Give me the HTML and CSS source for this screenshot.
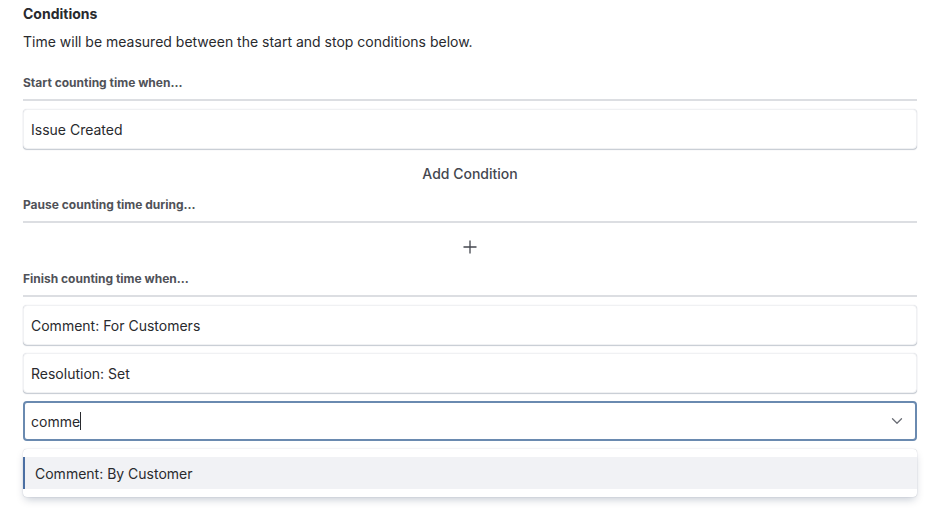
FILE: index.html
```html
<!DOCTYPE html>
<html>
<head>
<meta charset="utf-8">
<link rel="stylesheet" href="styles.css">
</head>
<body>
<div class="page">
  <h2 class="title">Conditions</h2>
  <p class="desc">Time will be measured between the start and stop conditions below.</p>

  <section class="group">
    <div class="label">Start counting time when...</div>
    <div class="rule"></div>
    <div class="items">
      <div class="card">Issue Created</div>
      <button class="add-btn">Add Condition</button>
    </div>
  </section>

  <section class="group">
    <div class="label">Pause counting time during...</div>
    <div class="rule"></div>
    <div class="items">
      <button class="plus-btn" aria-label="Add">
        <svg width="14" height="14" viewBox="0 0 14 14"><path d="M7 0.5V13.5M0.5 7H13.5" stroke="#44474f" stroke-width="1.3" fill="none"/></svg>
      </button>
    </div>
  </section>

  <section class="group">
    <div class="label">Finish counting time when...</div>
    <div class="rule"></div>
    <div class="items">
      <div class="card">Comment: For Customers</div>
      <div class="card">Resolution: Set</div>
      <div class="select-wrap">
        <div class="select">
          <span class="typed">comme</span><span class="caret"></span>
          <svg class="chev" width="12" height="8" viewBox="0 0 12 8"><path d="M1.5 1.8L6 6.2L10.5 1.8" stroke="#6b6e76" stroke-width="1.3" fill="none" stroke-linecap="round" stroke-linejoin="round"/></svg>
        </div>
        <div class="menu">
          <div class="option">Comment: By Customer</div>
        </div>
      </div>
    </div>
  </section>

  <h3 class="next">Calendar display</h3>
</div>
</body>
</html>
```
FILE: styles.css
```css
* { box-sizing: border-box; }
html, body { margin: 0; padding: 0; background: #ffffff; }
body {
  font-family: Inter, "Noto Sans", "Liberation Sans", sans-serif;
  color: #292a2e;
  overflow: hidden;
  height: 509px;
}
.page {
  padding: 4px 13px 0 23px;
}
.title {
  margin: 0;
  font-size: 14px;
  line-height: 20px;
  font-weight: 650;
  color: #292a2e;
}
.desc {
  margin: 8px 0 0;
  font-size: 14px;
  line-height: 20px;
  color: #292a2e;
}
.group { margin-top: 8px; }
.group:first-of-type { margin-top: 23px; }
.label {
  font-size: 12px;
  line-height: 16px;
  font-weight: 700;
  color: #505258;
}
.rule {
  height: 2px;
  background: #dcdee2;
  margin: 8px 0;
}
.items {
  display: flex;
  flex-direction: column;
  gap: 8px;
}
.card {
  height: 40px;
  display: flex;
  align-items: center;
  padding: 0 7px;
  font-size: 14px;
  border-radius: 4px;
  border: 1px solid #f0f1f3;
  box-shadow: 0 1px 1px rgba(9, 30, 66, 0.22), 0 0 1px rgba(9, 30, 66, 0.18);
  background: #fff;
  color: #292a2e;
}
.add-btn, .plus-btn {
  height: 32px;
  border: none;
  background: transparent;
  font-family: inherit;
  display: flex;
  align-items: center;
  justify-content: center;
  padding: 0;
  width: 100%;
}
.add-btn {
  font-size: 14px;
  font-weight: 500;
  color: #44474f;
}
.select-wrap { position: relative; }
.select {
  height: 40px;
  border: 2px solid #6a8ab0;
  border-radius: 4px;
  display: flex;
  align-items: center;
  padding: 0 6px;
  font-size: 14px;
  color: #292a2e;
}
.caret {
  display: inline-block;
  width: 1px;
  height: 18px;
  background: #292a2e;
  margin-left: 0;
}
.chev { margin-left: auto; margin-right: 6px; }
.menu {
  position: absolute;
  left: 0;
  right: 0;
  top: 48px;
  padding: 8px 0;
  background: #fff;
  border-radius: 4px;
  box-shadow: 0 4px 8px -2px rgba(9, 30, 66, 0.25), 0 0 1px rgba(9, 30, 66, 0.31);
  z-index: 2;
}
.option {
  height: 32px;
  display: flex;
  align-items: center;
  padding-left: 10px;
  border-left: 2px solid #4b6fa3;
  background: #f1f2f5;
  font-size: 14px;
  color: #292a2e;
}
.next {
  margin: 37px 0 0;
  font-size: 14px;
  line-height: 20px;
  font-weight: 650;
}
```
